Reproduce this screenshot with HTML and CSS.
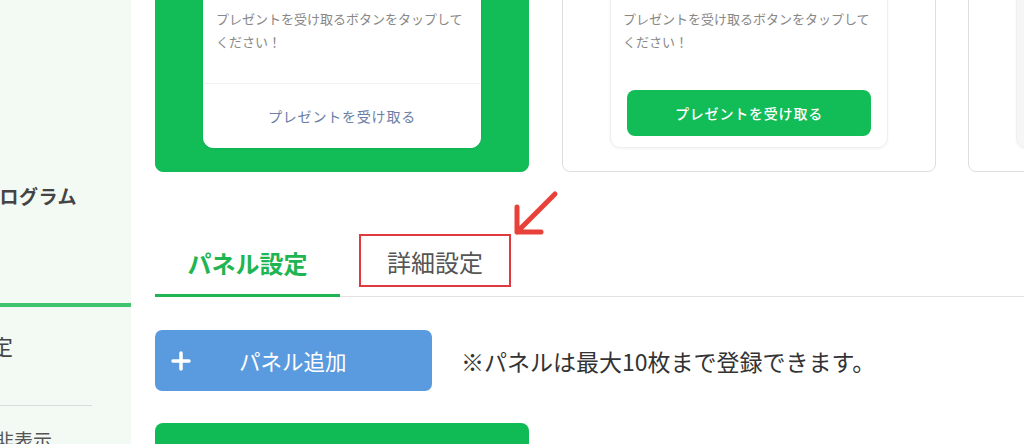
FILE: index.html
```html
<!DOCTYPE html>
<html>
<head>
    <title>パネル設定</title>
    <link rel="stylesheet" href="styles.css">
</head>
<body>
    <aside class="sidebar">
        <div class="side-title">プログラム</div>
        <div class="side-bar"></div>
        <div class="side-head">設定</div>
        <div class="side-line"></div>
        <div class="side-item">非表示</div>
    </aside>
    <main class="content">
        <div class="cards">
            <div class="card card-selected">
                <div class="present">
                    <p class="present-msg">プレゼントを受け取るボタンをタップしてください！</p>
                    <div class="present-foot foot-link">プレゼントを受け取る</div>
                </div>
            </div>
            <div class="card">
                <div class="present">
                    <p class="present-msg">プレゼントを受け取るボタンをタップしてください！</p>
                    <div class="present-foot">
                        <button class="present-btn">プレゼントを受け取る</button>
                    </div>
                </div>
            </div>
            <div class="card">
                <div class="present present-gray"></div>
            </div>
        </div>

        <div class="tabs">
            <div class="tab active">パネル設定</div>
            <div class="tab tab-detail">
                <span class="mark">詳細設定</span>
                <svg class="arrow" width="50" height="50" viewBox="0 0 50 50">
                    <path d="M46 4 L8 42 M8 17 L8 42 L32 42" fill="none" stroke="#e8413a" stroke-width="5" stroke-linecap="round" stroke-linejoin="round"/>
                </svg>
            </div>
        </div>

        <div class="panel-tools">
            <button class="btn-add">
                <svg width="20" height="20" viewBox="0 0 20 20">
                    <path d="M10 2 V18 M2 10 H18" stroke="#fff" stroke-width="3.5" stroke-linecap="round"/>
                </svg>
                <span>パネル追加</span>
            </button>
            <p class="note">※パネルは最大10枚まで登録できます。</p>
        </div>

        <div class="panel-row">
            <div class="panel-item"></div>
        </div>
    </main>
</body>
</html>
```
FILE: styles.css
```css
* {
    box-sizing: border-box;
}
body {
    margin: 0;
    height: 444px;
    overflow: hidden;
    display: flex;
    font-family: "Noto Sans CJK JP", "Noto Sans", sans-serif;
    background: #fff;
    color: #333;
}
.sidebar {
    width: 131px;
    flex-shrink: 0;
    background: #f3f9f3;
    overflow: hidden;
    padding-top: 184px;
}
.side-title {
    font-size: 19px;
    line-height: 24px;
    font-weight: bold;
    color: #444;
    margin-left: -20px;
    white-space: nowrap;
    letter-spacing: 0.5px;
}
.side-bar {
    height: 4px;
    background: #3ec46d;
    margin-top: 95px;
}
.side-head {
    font-size: 22px;
    line-height: 30px;
    color: #444;
    margin-top: 23px;
    margin-left: -31px;
    white-space: nowrap;
}
.side-line {
    width: 92px;
    height: 1px;
    background: #dcdcdc;
    margin-top: 45px;
}
.side-item {
    font-size: 19px;
    line-height: 26px;
    color: #555;
    margin-top: 21px;
    margin-left: -5px;
    white-space: nowrap;
}
.content {
    flex: 1;
    overflow: hidden;
    padding-left: 24px;
}
.cards {
    display: flex;
    gap: 33px;
    margin-top: -40px;
}
.card {
    width: 374px;
    height: 212px;
    flex-shrink: 0;
    padding: 0 47px 23px;
    border: 1px solid #dedede;
    border-radius: 8px;
    background: #fff;
}
.card:last-child {
    margin-left: -1px;
}
.card-selected {
    background: #12bc57;
    border-color: #12bc57;
}
.present {
    height: 100%;
    background: #fff;
    border: 1px solid #efefef;
    border-radius: 10px;
    display: flex;
    flex-direction: column;
    box-shadow: 0 1px 3px rgba(0, 0, 0, 0.05);
}
.card-selected .present {
    border-color: #fff;
}
.present-gray {
    background: #f6f6f6;
}
.present-msg {
    margin: 0;
    height: 123px;
    padding: 45px 12px 0 12px;
    font-size: 13px;
    line-height: 23px;
    color: #888;
}
.present-foot {
    height: 65px;
    padding: 8px 16px 11px;
}
.foot-link {
    border-top: 1px solid #f2f2f2;
    padding: 0;
    display: flex;
    align-items: center;
    justify-content: center;
    font-size: 14px;
    letter-spacing: 0.8px;
    color: #6b7ea6;
}
.present-btn {
    width: 100%;
    height: 46px;
    border: none;
    border-radius: 8px;
    background: #12bc57;
    color: #fff;
    font-family: inherit;
    font-size: 14px;
    font-weight: 500;
    letter-spacing: 0.8px;
}
.tabs {
    display: flex;
    height: 69px;
    margin-top: 56px;
    border-bottom: 1px solid #e2e2e2;
}
.tab {
    height: 69px;
    font-size: 24px;
    line-height: 32px;
    color: #555;
    border-bottom: 3px solid transparent;
}
.tab.active {
    width: 185px;
    text-align: center;
    padding: 19px 0 15px;
    color: #1fb552;
    font-weight: bold;
    border-bottom-color: #1fb552;
}
.tab-detail {
    position: relative;
    padding: 6px 0 7px 19px;
}
.mark {
    display: inline-block;
    border: 2px solid #e0393e;
    padding: 10px 26px 7px;
}
.arrow {
    position: absolute;
    left: 169px;
    top: -38px;
}
.panel-tools {
    display: flex;
    align-items: center;
    margin-top: 33px;
}
.btn-add {
    width: 277px;
    height: 61px;
    border: none;
    border-radius: 7px;
    background: #5a9ade;
    color: #fff;
    display: flex;
    align-items: center;
    padding: 0 0 0 16px;
    font-family: inherit;
    font-size: 21.5px;
}
.btn-add span {
    margin-left: 48px;
}
.note {
    margin: 0 0 0 29px;
    font-size: 23px;
    color: #333;
    white-space: nowrap;
}
.panel-row {
    margin-top: 32px;
}
.panel-item {
    width: 374px;
    height: 60px;
    border-radius: 8px;
    background: #10bb55;
}
```
